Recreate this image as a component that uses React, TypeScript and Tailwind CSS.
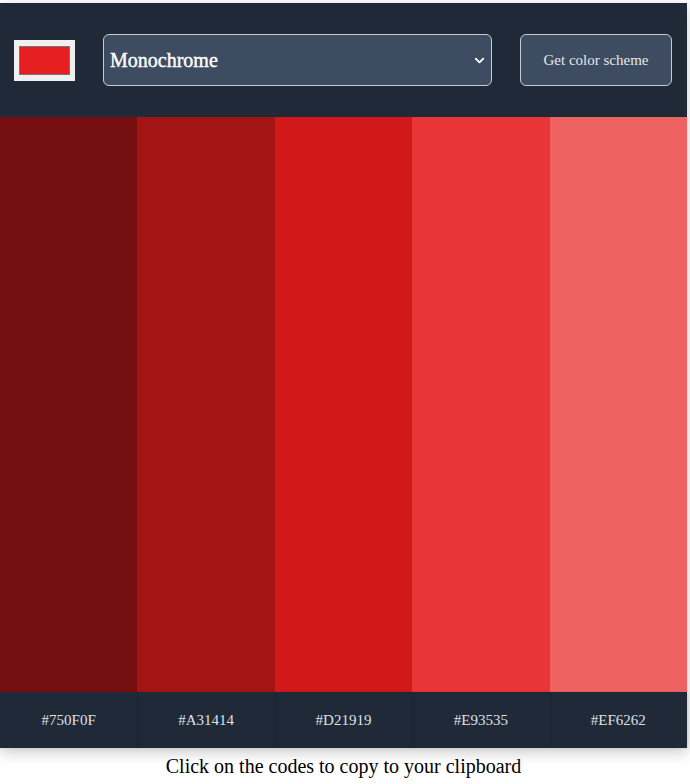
import { ChevronDown } from 'lucide-react';

const COLORES = ['#750F0F', '#A31414', '#D21919', '#E93535', '#EF6262'];

export default function App() {
  return (
    <div className="min-h-screen bg-white font-['Liberation_Serif',serif]">
      <div className="w-[687px] pt-[3px]">
        <div className="shadow-[0_4px_14px_rgba(0,0,0,0.22)]">
          {/* cabecera */}
          <header className="h-[114px] bg-[#1f2937] flex items-center pl-[14px]">
            <div className="w-[61px] h-[41px] bg-[#f0f0f0] flex items-center justify-center">
              <div className="w-[51px] h-[29px] bg-[#e51f20] border border-[#777]" />
            </div>
            <div className="ml-[28px] w-[389px] h-[52px] bg-[#3e4c62] border border-[#c8ccd2] rounded-[6px] flex items-center justify-between pl-[6px] pr-[4px]">
              <span className="text-[20px] font-normal text-white [-webkit-text-stroke:0.4px_white]">Monochrome</span>
              <ChevronDown className="w-[15px] h-[15px] text-white" strokeWidth={3} />
            </div>
            <button className="ml-[28px] w-[152px] h-[52px] bg-[#3e4c62] border border-[#c8ccd2] rounded-[6px] text-[15px] text-[#e5e7eb]">
              Get color scheme
            </button>
          </header>

          {/* colores */}
          <div className="grid grid-cols-5 h-[575px]">
            {COLORES.map(c => (
              <div key={c} style={{ backgroundColor: c }} />
            ))}
          </div>

          {/* codigos */}
          <div className="grid grid-cols-5 h-[56px] bg-[#1f2937]">
            {COLORES.map(c => (
              <div
                key={c}
                className="flex items-center justify-center text-[15px] text-[#dde1e7] shadow-[1px_0_2px_rgba(0,0,0,0.12)]"
              >
                {c}
              </div>
            ))}
          </div>
        </div>
        <p className="text-center text-[20px] text-black mt-[4px] leading-[28px]">
          Click on the codes to copy to your clipboard
        </p>
      </div>
    </div>
  );
}
